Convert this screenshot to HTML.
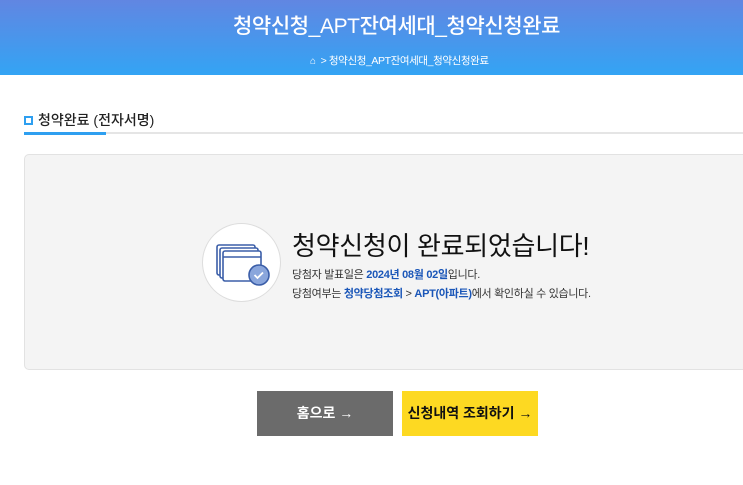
<!DOCTYPE html>
<html><head><meta charset="utf-8"><style>
*{margin:0;padding:0;box-sizing:border-box}
body{width:743px;height:485px;overflow:hidden;background:#fff;font-family:"Liberation Sans","Noto Sans CJK KR",sans-serif;position:relative}
.hd{position:absolute;left:0;top:0;width:743px;height:75px;background:linear-gradient(#6186e2,#33a4f4)}
.hd h1{position:absolute;top:10px;left:233px;color:#fff;font-size:21px;font-weight:500;letter-spacing:-0.4px;white-space:nowrap}
.bc{position:absolute;top:53px;left:310px;color:#fff;font-size:10.5px;letter-spacing:-0.4px;white-space:nowrap}
.tt{position:absolute;left:24px;top:110px;font-size:14px;color:#222;font-weight:500}
.tt i{display:inline-block;width:9px;height:9px;border:2px solid #2e9ff0;margin-right:5px;vertical-align:0px}
.ln{position:absolute;left:24px;top:132px;width:719px;height:2px;background:#e5e5e5}
.ln2{position:absolute;left:24px;top:132px;width:82px;height:3px;background:#2e9ff0}
.box{position:absolute;left:24px;top:154px;width:730px;height:216px;background:#f4f4f4;border:1px solid #e2e2e2;border-radius:5px}
.cir{position:absolute;left:202px;top:223px;width:79px;height:79px;border-radius:50%;background:#fff;border:1px solid #ddd}
.m{position:absolute;left:292px;top:226px;font-size:26px;color:#111;letter-spacing:-0.3px}
.s{position:absolute;left:292px;font-size:11px;color:#333;letter-spacing:-0.3px}
.s b{color:#1a56b8;font-weight:600}
.btn{position:absolute;top:391px;height:45px;font-size:14px;font-weight:700;text-align:center;line-height:45px}
</style></head><body>
<div class="hd"><h1>청약신청_APT잔여세대_청약신청완료</h1>
<div class="bc"><span style="font-size:10px">⌂</span> &nbsp;&gt; 청약신청_APT잔여세대_청약신청완료</div></div>
<div class="tt"><i></i>청약완료 (전자서명)</div>
<div class="ln"></div><div class="ln2"></div>
<div class="box"></div>
<div class="cir"><svg width="79" height="79" viewBox="0 0 79 79" style="position:absolute;left:-1px;top:-1px">
<g fill="#fff" stroke="#3b5ea8" stroke-width="1.6">
<rect x="15" y="22" width="38" height="30" rx="2"/><rect x="18" y="25" width="38" height="30" rx="2"/><rect x="21" y="28" width="38" height="30" rx="2"/>
<line x1="21" y1="34" x2="59" y2="34"/></g>
<circle cx="57" cy="52" r="10" fill="#8aa6dc" stroke="#3b5ea8" stroke-width="1.6"/>
<path d="M52.5 52l3 3 5.5-5.5" fill="none" stroke="#fff" stroke-width="1.8"/></svg></div>
<div class="m">청약신청이 완료되었습니다!</div>
<div class="s" style="top:266px">당첨자 발표일은 <b>2024년 08월 02일</b>입니다.</div>
<div class="s" style="top:285px">당첨여부는 <b>청약당첨조회</b> &gt; <b>APT(아파트)</b>에서 확인하실 수 있습니다.</div>
<div class="btn" style="left:257px;width:136px;background:#6b6b6b;color:#fff">홈으로 →</div>
<div class="btn" style="left:402px;width:136px;background:#fdd922;color:#111">신청내역 조회하기 →</div>
</body></html>
